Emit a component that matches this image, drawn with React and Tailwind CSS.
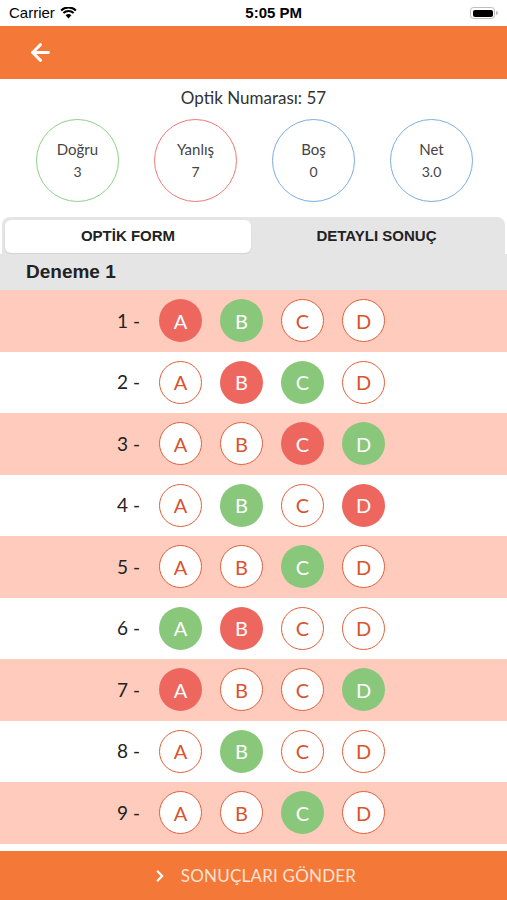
import { ArrowLeft, ChevronRight } from "lucide-react"

const stats = [
  { label: "Doğru", value: "3", border: "border-[#8fd08a]" },
  { label: "Yanlış", value: "7", border: "border-[#ef7a72]" },
  { label: "Boş", value: "0", border: "border-[#7aaee3]" },
  { label: "Net", value: "3.0", border: "border-[#7aaee3]" },
]

// r = red (wrong pick), g = green (correct), "" = empty
const rows = [
  ["r", "g", "", ""],
  ["", "r", "g", ""],
  ["", "", "r", "g"],
  ["", "g", "", "r"],
  ["", "", "g", ""],
  ["g", "r", "", ""],
  ["r", "", "", "g"],
  ["", "g", "", ""],
  ["", "", "g", ""],
]

const letters = ["A", "B", "C", "D"]

const Bubble = ({ letter, state }) => {
  if (state === "r") {
    return (
      <div className="w-[43px] h-[43px] rounded-full bg-[#ee675f] flex items-center justify-center text-white text-[20px]">
        {letter}
      </div>
    )
  }
  if (state === "g") {
    return (
      <div className="w-[43px] h-[43px] rounded-full bg-[#89c77b] flex items-center justify-center text-white text-[20px]">
        {letter}
      </div>
    )
  }
  return (
    <div className="w-[43px] h-[43px] rounded-full bg-white border-[1.5px] border-[#e0603a] flex items-center justify-center text-[#d8542e] text-[20px]">
      {letter}
    </div>
  )
}

const StatusBar = () => (
  <div className="h-[26px] flex items-center justify-between px-[9px] bg-white text-black font-['Liberation_Sans',sans-serif]">
    <div className="flex items-center gap-[5px] text-[15px]">
      <span>Carrier</span>
      <svg width="17" height="12" viewBox="0 0 17 12">
        <path d="M8.5 11.5 L5.6 8.3 A4.2 4.2 0 0 1 11.4 8.3 Z" fill="black" />
        <path d="M3.4 6 A7.4 7.4 0 0 1 13.6 6" stroke="black" strokeWidth="2.1" fill="none" />
        <path d="M1.1 3.5 A10.6 10.6 0 0 1 15.9 3.5" stroke="black" strokeWidth="2.1" fill="none" />
      </svg>
    </div>
    <span className="text-[15px] font-bold">5:05 PM</span>
    <div className="flex items-center gap-[1px]">
      <div className="w-[25px] h-[12px] rounded-[3.5px] border border-[#bdbdbd] p-[1.5px]">
        <div className="w-full h-full rounded-[2px] bg-black" />
      </div>
      <div className="w-[1.5px] h-[4px] bg-[#bdbdbd] rounded-r" />
    </div>
  </div>
)

export default function App() {
  return (
    <div className="w-[507px] h-[900px] bg-white flex flex-col overflow-hidden font-['Lato',sans-serif]">
      <StatusBar />
      <div className="h-[53px] bg-[#f47838] flex items-center pl-[27px] shrink-0">
        <ArrowLeft className="w-[27px] h-[27px] text-white" strokeWidth={2.6} />
      </div>

      <div className="pt-[8px] text-center text-[17px] text-[#333] leading-[22px]">Optik Numarası: 57</div>

      <div className="flex justify-center gap-[35px] mt-[10px] pl-[2px]">
        {stats.map((s) => (
          <div
            key={s.label}
            className={`w-[83px] h-[83px] rounded-full border-[1.5px] ${s.border} flex flex-col items-center justify-center text-[#444]`}
          >
            <span className="text-[15px] leading-[18px]">{s.label}</span>
            <span className="text-[14px] leading-[18px] mt-[5px]">{s.value}</span>
          </div>
        ))}
      </div>

      <div className="mx-[2px] mt-[15px] h-[37px] bg-[#e5e5e5] rounded-t-[8px] flex p-[3px] pb-[1px]">
        <div className="w-[246px] bg-white rounded-[6px] flex items-center justify-center text-[15px] font-bold text-[#222] font-['Liberation_Sans',sans-serif] shadow-[0_1px_2px_rgba(0,0,0,0.1)]">
          OPTİK FORM
        </div>
        <div className="flex-1 flex items-center justify-center text-[15px] font-bold text-[#222] font-['Liberation_Sans',sans-serif]">
          DETAYLI SONUÇ
        </div>
      </div>

      <div className="h-[36px] bg-[#e5e5e5] flex items-center pl-[26px] text-[19px] font-bold text-[#222] font-['Liberation_Sans',sans-serif]">
        Deneme 1
      </div>

      <div className="flex flex-col">
        {rows.map((row, i) => (
          <div
            key={i}
            className={`h-[61.5px] flex items-center ${i % 2 === 0 ? "bg-[#fecbbd]" : "bg-white"}`}
          >
            <div className="w-[142px] text-right pr-[2px] text-[19px] text-[#222]">{i + 1} -</div>
            <div className="flex gap-[18px] ml-[17px]">
              {letters.map((l, j) => (
                <Bubble key={l} letter={l} state={row[j]} />
              ))}
            </div>
          </div>
        ))}
      </div>

      <div className="flex-1 bg-white" />

      <div className="h-[49px] bg-[#f47838] flex items-center justify-center gap-[12px] shrink-0">
        <ChevronRight className="w-[18px] h-[18px] text-white" strokeWidth={3} />
        <span className="text-[17px] text-[#fde2d2] tracking-[0.2px]">SONUÇLARI GÖNDER</span>
      </div>
    </div>
  )
}
